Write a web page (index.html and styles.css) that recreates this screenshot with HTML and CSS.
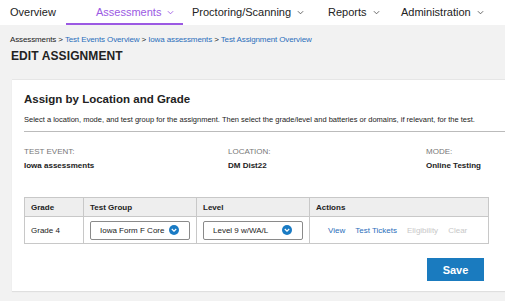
FILE: index.html
```html
<!DOCTYPE html>
<html>
<head>
<meta charset="utf-8">
<link rel="stylesheet" href="styles.css">
</head>
<body>
<nav class="topnav">
  <a class="nav-item n-overview">Overview</a>
  <a class="nav-item n-assess active">Assessments <svg class="chev" viewBox="0 0 8 5"><path d="M1 1l3 3 3-3"/></svg></a>
  <a class="nav-item n-proc">Proctoring/Scanning <svg class="chev" viewBox="0 0 8 5"><path d="M1 1l3 3 3-3"/></svg></a>
  <a class="nav-item n-rep">Reports <svg class="chev" viewBox="0 0 8 5"><path d="M1 1l3 3 3-3"/></svg></a>
  <a class="nav-item n-admin">Administration <svg class="chev" viewBox="0 0 8 5"><path d="M1 1l3 3 3-3"/></svg></a>
</nav>
<main class="page">
  <div class="crumbs"><span class="crumb-cur">Assessments</span> &gt; <a>Test Events Overview</a> &gt; <a>Iowa assessments</a> &gt; <a>Test Assignment Overview</a></div>
  <h1 class="page-title">EDIT ASSIGNMENT</h1>
  <section class="card">
    <h2 class="card-title">Assign by Location and Grade</h2>
    <p class="card-desc">Select a location, mode, and test group for the assignment. Then select the grade/level and batteries or domains, if relevant, for the test.</p>
    <div class="meta">
      <div class="meta-col m1"><div class="meta-label">TEST EVENT:</div><div class="meta-val">Iowa assessments</div></div>
      <div class="meta-col m2"><div class="meta-label">LOCATION:</div><div class="meta-val">DM Dist22</div></div>
      <div class="meta-col m3"><div class="meta-label">MODE:</div><div class="meta-val">Online Testing</div></div>
    </div>
    <table class="grid">
      <colgroup><col class="c1"><col class="c2"><col class="c3"><col class="c4"></colgroup>
      <thead>
        <tr><th>Grade</th><th>Test Group</th><th>Level</th><th>Actions</th></tr>
      </thead>
      <tbody>
        <tr>
          <td>Grade 4</td>
          <td><div class="select"><span>Iowa Form F Core</span><svg class="sel-ic" viewBox="0 0 10 10"><circle cx="5" cy="5" r="5"/><path d="M2.8 4l2.2 2.2L7.2 4"/></svg></div></td>
          <td><div class="select"><span>Level 9 w/WA/L</span><svg class="sel-ic" viewBox="0 0 10 10"><circle cx="5" cy="5" r="5"/><path d="M2.8 4l2.2 2.2L7.2 4"/></svg></div></td>
          <td class="actions"><a class="act on">View</a><a class="act on">Test Tickets</a><a class="act off">Eligibility</a><a class="act off">Clear</a></td>
        </tr>
      </tbody>
    </table>
    <div class="btn-row"><button class="save">Save</button></div>
  </section>
</main>
</body>
</html>
```
FILE: styles.css
```css
html, body { margin: 0; padding: 0; }
body {
  width: 505px; height: 301px; overflow: hidden;
  background: #f2f2f2;
  font-family: "Liberation Sans", Arial, sans-serif;
  color: #222;
}
.topnav {
  height: 25px; background: #fff;
  display: flex; align-items: stretch;
  box-sizing: border-box;
}
.nav-item {
  display: flex; align-items: center; gap: 6px;
  font-size: 11px; color: #222; box-sizing: border-box;
  padding-top: 1px; border-bottom: 2px solid transparent;
}
.chev { width: 7px; height: 5px; fill: none; stroke: #555; stroke-width: 1; margin-top: 1px; }
.n-overview { padding-left: 10px; width: 66px; }
.n-assess { width: 117px; padding-left: 30px; color: #9b59e3; border-bottom-color: #9b59e3; }
.n-assess .chev { stroke: #9b59e3; }
.n-proc { padding-left: 9px; width: 145px; }
.n-rep { width: 73px; }
.page { padding: 10px 0 0 12px; }
.crumbs {
  font-size: 8px; letter-spacing: -0.12px; color: #222;
  margin-left: -2px; line-height: 9px;
}
.crumbs a { color: #2a6ebb; }
.page-title {
  margin: 5px 0 0 -1px; font-size: 12px; font-weight: bold; line-height: 14px;
  letter-spacing: 0.1px; color: #222;
}
.card {
  margin-top: 16px; background: #fff; width: 510px; height: 212px;
  box-sizing: border-box; padding: 11px 0 0 12px;
  border-top: 1px solid #e6e6e6;
  box-shadow: 0 1px 1px rgba(0,0,0,0.08);
}
.card-title { margin: 0; font-size: 11.5px; font-weight: bold; line-height: 16px; color: #222; }
.card-desc {
  margin: 8px 0 0; font-size: 7.5px; letter-spacing: 0; line-height: 9px;
  padding-bottom: 7px; border-bottom: 1px solid #bbb;
}
.meta { display: flex; margin-top: 15px; }
.meta-col { display: flex; flex-direction: column; gap: 5px; }
.m1 { width: 204px; } .m2 { width: 198px; }
.meta-label { font-size: 8px; color: #777; line-height: 9px; }
.meta-val { font-size: 8px; font-weight: bold; line-height: 9px; }
.grid {
  margin-top: 27px; border-collapse: collapse; width: 464px; table-layout: fixed;
  font-size: 8px;
}
.c1 { width: 59px; } .c2 { width: 113px; } .c3 { width: 113px; } .c4 { width: 179px; }
.grid th, .grid td { border: 1px solid #c8c8c8; padding: 0 0 0 6px; text-align: left; }
.grid th { background: #eeeeee; height: 18px; font-weight: bold; }
.grid td { height: 26px; }
.select {
  display: flex; align-items: center; justify-content: space-between;
  width: 100px; height: 19px; box-sizing: border-box; border: 1px solid #8a8a8a; border-radius: 2px;
  padding: 0 10px 0 9px; font-size: 8px;
}
.sel-ic { width: 10px; height: 10px; }
.sel-ic circle { fill: #1a7bc4; }
.sel-ic path { fill: none; stroke: #fff; stroke-width: 1.2; }
.actions { padding-left: 18px !important; }
.act { margin-right: 10px; font-size: 8px; }
.act.on { color: #2a6ebb; }
.act.off { color: #c8c8c8; }
.btn-row { width: 460px; display: flex; justify-content: flex-end; margin-top: 14px; }
.save {
  width: 57px; height: 23px; background: #1a7bbf; color: #fff; border: 0; padding: 0;
  font-family: "Liberation Sans", Arial, sans-serif; font-size: 11px; font-weight: bold;
}
```
